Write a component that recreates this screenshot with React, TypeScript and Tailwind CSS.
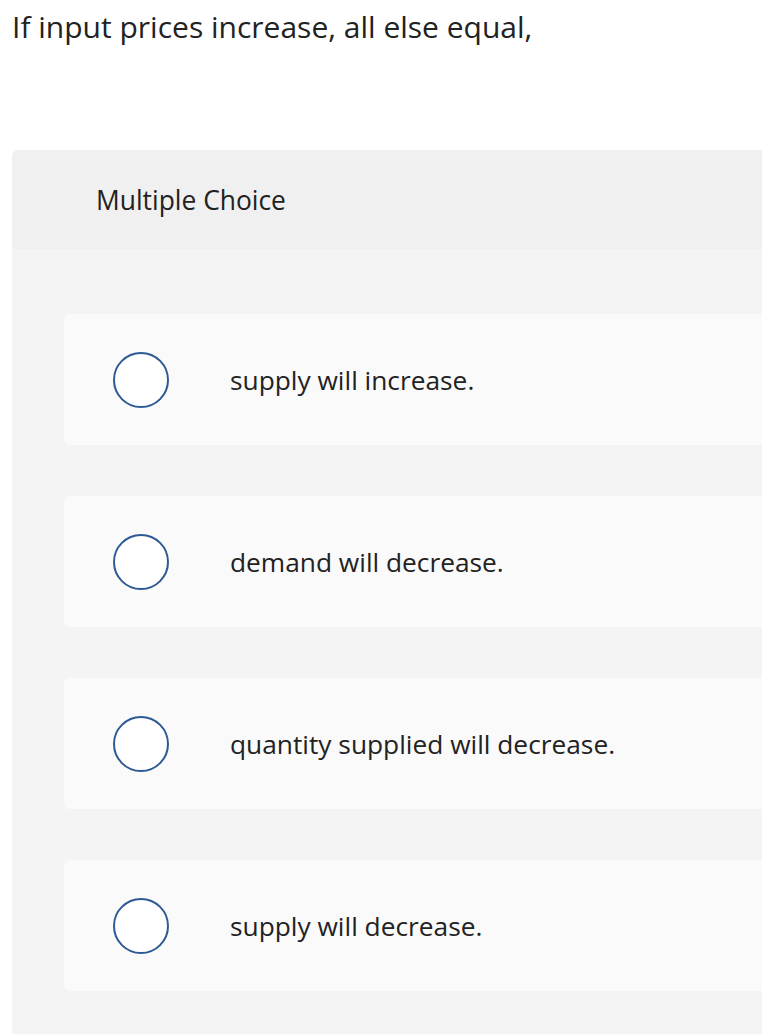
import React from "react";

const options = [
  "supply will increase.",
  "demand will decrease.",
  "quantity supplied will decrease.",
  "supply will decrease.",
];

export default function App() {
  return (
    <div
      className="w-[762px] h-[1034px] overflow-hidden bg-white text-[#222222]"
      style={{ fontFamily: "'Open Sans', sans-serif" }}
    >
      <div className="pl-[12px] pt-[8px] h-[150px]">
        <p className="text-[30px] leading-[38px] text-[#222222]">
          If input prices increase, all else equal,
        </p>
      </div>
      <div className="ml-[12px] w-[800px] rounded-tl-[6px] overflow-hidden">
        <div className="h-[99px] bg-[#f0f0f0] pl-[84px] flex items-center">
          <span className="text-[26.4px] leading-none text-[#222222] pt-[2px]">Multiple Choice</span>
        </div>
        <div className="bg-[#f4f4f4] pt-[65px] pl-[52px] pb-[60px] flex flex-col gap-[51px]">
          {options.map((o) => (
            <div
              key={o}
              className="h-[131px] rounded-[6px] bg-[#fafafa] flex items-center"
            >
              <div className="ml-[49px] w-[56px] h-[56px] rounded-full border-2 border-[#2d5a94] bg-white shrink-0" />
              <span className="ml-[61px] text-[26.3px] leading-none text-[#222222] pt-[2px]">{o}</span>
            </div>
          ))}
        </div>
      </div>
    </div>
  );
}
